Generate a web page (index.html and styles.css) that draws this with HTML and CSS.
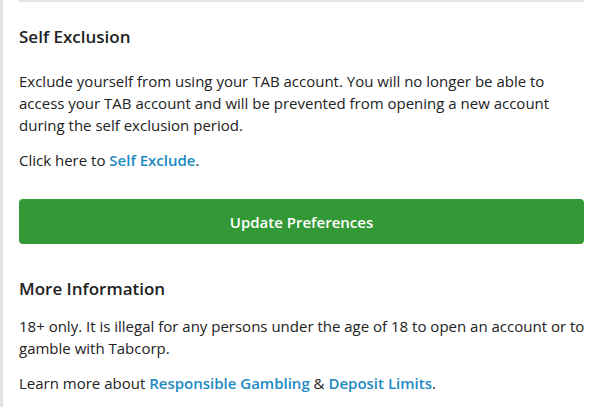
FILE: index.html
```html
<!DOCTYPE html>
<html lang="en">
<head>
    <meta charset="UTF-8">
    <meta name="viewport" content="width=device-width, initial-scale=1.0">
    <title>Preferences</title>
    <link rel="stylesheet" href="styles.css">
</head>
<body>

<div class="painel">
    <div class="secao">
        <h3>Self Exclusion</h3>
        <p>Exclude yourself from using your TAB account. You will no longer be able to access your TAB account and will be prevented from opening a new account during the self exclusion period.</p>
        <p>Click here to <a href="#">Self Exclude</a>.</p>
    </div>

    <button type="button" class="botao">Update Preferences</button>

    <div class="info">
        <h3>More Information</h3>
        <p>18+ only. It is illegal for any persons under the age of 18 to open an account or to gamble with Tabcorp.</p>
        <p>Learn more about <a href="#">Responsible Gambling</a> &amp; <a href="#">Deposit Limits</a>.</p>
    </div>
</div>

</body>
</html>
```

FILE: styles.css
```css
body {
    margin: 0;
    font-family: "Open Sans", Arial, sans-serif;
    color: #222;
    background-color: #fff;
}
.painel {
    border-left: 3px solid #e3e3e3;
    padding: 0 16px 20px 16px;
    min-height: 407px;
    box-sizing: border-box;
}
.secao {
    border-top: 2px solid #e6e6e6;
    padding-top: 23px;
}
.secao h3 {
    margin-bottom: 21px;
}
.secao p {
    margin-right: 28px;
}
h3 {
    font-size: 17px;
    font-weight: 600;
    margin: 0 0 14px 0;
    line-height: 24px;
}
p {
    font-size: 15px;
    line-height: 22px;
    margin: 0 0 13px 0;
}
a {
    color: #1d8ac4;
    font-weight: 600;
    text-decoration: none;
}
.botao {
    display: block;
    width: 100%;
    height: 45px;
    margin-top: 28px;
    background-color: #339936;
    color: #fff;
    border: none;
    border-radius: 4px;
    font-family: "Open Sans", Arial, sans-serif;
    font-size: 15px;
    font-weight: 600;
    cursor: pointer;
}
.info {
    padding-top: 33px;
    margin-right: -4px;
}
```
